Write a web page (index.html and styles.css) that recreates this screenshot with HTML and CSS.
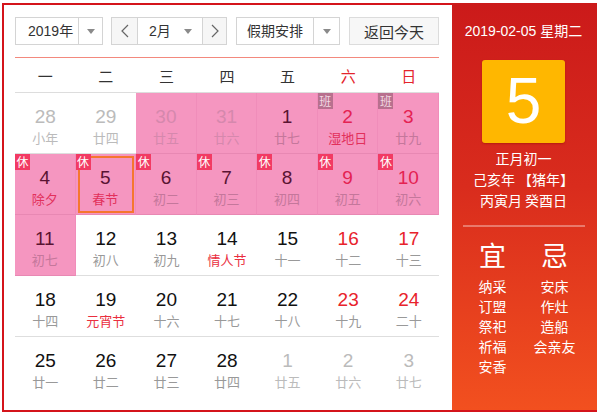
FILE: index.html
```html
<!DOCTYPE html>
<html lang="zh">
<head>
<meta charset="utf-8">
<title>万年历</title>
<link rel="stylesheet" href="styles.css">
</head>
<body>
<div class="cal">
  <div class="main">
    <div class="controls">
      <div class="select year"><span class="sel-text">2019年</span><span class="sel-arrow"><i class="tri"></i></span></div>
      <div class="month-group">
        <span class="nav-btn prev"><svg width="8" height="14" viewBox="0 0 8 14"><path d="M7 1 L1 7 L7 13" fill="none" stroke="#666" stroke-width="1.2"/></svg></span>
        <span class="month-mid"><span class="sel-text">2月</span><i class="tri"></i></span>
        <span class="nav-btn next"><svg width="8" height="14" viewBox="0 0 8 14"><path d="M1 1 L7 7 L1 13" fill="none" stroke="#666" stroke-width="1.2"/></svg></span>
      </div>
      <div class="select holiday"><span class="sel-text">假期安排</span><span class="sel-arrow"><i class="tri"></i></span></div>
      <div class="today-btn">返回今天</div>
    </div>
    <div class="weekdays">
      <span>一</span><span>二</span><span>三</span><span>四</span><span>五</span><span class="wk">六</span><span class="wk">日</span>
    </div>
    <div class="grid">
      <div class="cell other"><b>28</b><em>小年</em></div>
      <div class="cell other"><b>29</b><em>廿四</em></div>
      <div class="cell other hol"><b>30</b><em>廿五</em></div>
      <div class="cell other hol"><b>31</b><em>廿六</em></div>
      <div class="cell hol"><b>1</b><em>廿七</em></div>
      <div class="cell hol red"><span class="tag ban">班</span><b>2</b><em class="fest">湿地日</em></div>
      <div class="cell hol red"><span class="tag ban">班</span><b>3</b><em>廿九</em></div>

      <div class="cell hol"><span class="tag">休</span><b>4</b><em class="fest">除夕</em></div>
      <div class="cell hol sel"><span class="tag">休</span><b>5</b><em class="fest">春节</em></div>
      <div class="cell hol"><span class="tag">休</span><b>6</b><em>初二</em></div>
      <div class="cell hol"><span class="tag">休</span><b>7</b><em>初三</em></div>
      <div class="cell hol"><span class="tag">休</span><b>8</b><em>初四</em></div>
      <div class="cell hol red"><span class="tag">休</span><b>9</b><em>初五</em></div>
      <div class="cell hol red"><span class="tag">休</span><b>10</b><em>初六</em></div>

      <div class="cell hol"><b>11</b><em>初七</em></div>
      <div class="cell"><b>12</b><em>初八</em></div>
      <div class="cell"><b>13</b><em>初九</em></div>
      <div class="cell"><b>14</b><em class="fest">情人节</em></div>
      <div class="cell"><b>15</b><em>十一</em></div>
      <div class="cell red"><b>16</b><em>十二</em></div>
      <div class="cell red"><b>17</b><em>十三</em></div>

      <div class="cell"><b>18</b><em>十四</em></div>
      <div class="cell"><b>19</b><em class="fest">元宵节</em></div>
      <div class="cell"><b>20</b><em>十六</em></div>
      <div class="cell"><b>21</b><em>十七</em></div>
      <div class="cell"><b>22</b><em>十八</em></div>
      <div class="cell red"><b>23</b><em>十九</em></div>
      <div class="cell red"><b>24</b><em>二十</em></div>

      <div class="cell last"><b>25</b><em>廿一</em></div>
      <div class="cell last"><b>26</b><em>廿二</em></div>
      <div class="cell last"><b>27</b><em>廿三</em></div>
      <div class="cell last"><b>28</b><em>廿四</em></div>
      <div class="cell last other"><b>1</b><em>廿五</em></div>
      <div class="cell last other"><b>2</b><em>廿六</em></div>
      <div class="cell last other"><b>3</b><em>廿七</em></div>
    </div>
  </div>
  <div class="side">
    <div class="side-date">2019-02-05 星期二</div>
    <div class="big-day">5</div>
    <div class="lunar">
      <p>正月初一</p>
      <p>己亥年 【猪年】</p>
      <p>丙寅月 癸酉日</p>
    </div>
    <div class="side-line"></div>
    <div class="yiji">
      <div class="col">
        <div class="yj-title">宜</div>
        <p>纳采</p><p>订盟</p><p>祭祀</p><p>祈福</p><p>安香</p>
      </div>
      <div class="col">
        <div class="yj-title">忌</div>
        <p>安床</p><p>作灶</p><p>造船</p><p>会亲友</p>
      </div>
    </div>
  </div>
</div>
</body>
</html>
```
FILE: styles.css
```css
* { box-sizing: border-box; }
html, body { margin: 0; padding: 0; background: #fff; }
body {
  font-family: "Liberation Sans", "Noto Sans CJK SC", Arial, sans-serif;
  color: #222;
}
.cal {
  margin: 3px 0 0 2px;
  width: 595px;
  height: 409px;
  border: 2px solid #d4141b;
  border-right: 0;
  display: flex;
  background: #fff;
}
.main {
  width: 448px;
  padding: 12px 13px 0 11px;
}
.controls {
  display: flex;
  height: 28px;
  font-size: 14px;
  color: #333;
}
.select, .month-group, .today-btn {
  border: 1px solid #d4d4d4;
  height: 28px;
  display: flex;
  align-items: center;
  background: #fff;
}
.sel-text { line-height: 26px; }
.year { width: 88px; margin-right: 8px; }
.year .sel-text { width: 62px; padding-left: 12px; }
.sel-arrow {
  flex: 1;
  height: 26px;
  border-left: 1px solid #d4d4d4;
  display: flex;
  align-items: center;
  justify-content: center;
}
.tri {
  display: block;
  width: 0; height: 0;
  border-left: 4px solid transparent;
  border-right: 4px solid transparent;
  border-top: 5px solid #8a8a8a;
}
.month-group { width: 116px; margin-right: 9px; }
.nav-btn {
  width: 26px;
  height: 26px;
  background: #f6f6f6;
  display: flex;
  align-items: center;
  justify-content: center;
}
.nav-btn.prev { border-right: 1px solid #d4d4d4; }
.nav-btn.next { border-left: 1px solid #d4d4d4; width: 24px; }
.month-mid {
  flex: 1;
  display: flex;
  align-items: center;
  justify-content: space-between;
  padding: 0 10px 0 11px;
}
.holiday { width: 104px; margin-right: 9px; }
.holiday .sel-text { width: 76px; padding-left: 10px; }
.today-btn {
  width: 90px;
  justify-content: center;
  background: #f7f7f7;
  border-color: #dcdcdc;
  font-size: 15px;
}
.weekdays {
  margin-top: 12px;
  border-top: 1px solid #f3897d;
  border-bottom: 1px solid #ddd;
  height: 36px;
  display: grid;
  grid-template-columns: repeat(7, 1fr);
  align-items: center;
  text-align: center;
  font-family: "Noto Sans CJK SC", sans-serif;
  font-size: 15px;
  color: #333;
}
.weekdays .wk { color: #e4242b; }
.grid {
  display: grid;
  grid-template-columns: repeat(7, 1fr);
  grid-auto-rows: 61px;
}
.cell {
  position: relative;
  border-bottom: 1px solid #dedede;
  display: flex;
  flex-direction: column;
  align-items: center;
  padding-top: 13px;
}
.cell.last { border-bottom: 0; }
.cell b {
  font-weight: normal;
  font-size: 19px;
  line-height: 22px;
  color: #111;
}
.cell em {
  font-style: normal;
  font-family: "Noto Sans CJK SC", sans-serif;
  font-size: 13px;
  line-height: 20px;
  color: #999;
}
.cell.red b { color: #e8232c; }
.cell em.fest { color: #ea2f3f; }
.cell.other b { color: #bbb; }
.cell.other em { color: #bbb; }
.cell.hol {
  background: #f596c0;
  border-bottom-color: #e888b3;
  border-right: 1px solid #f08dba;
}
.cell.hol b { color: #5a1332; }
.cell.hol.red b { color: #e42252; }
.cell.hol em { color: #c4779b; }
.cell.hol em.fest { color: #e2305b; }
.cell.hol.other b { color: #d588ad; }
.cell.hol.other em { color: #d588ad; }
.cell.sel::after {
  content: "";
  position: absolute;
  left: 2px; right: 1px; top: 2px; bottom: 1px;
  border: 2px solid #f5772e;
}
.tag {
  position: absolute;
  z-index: 1;
  left: 0; top: 0;
  width: 15px;
  height: 16px;
  background: #f23a63;
  color: #fff;
  font-family: "Noto Sans CJK SC", sans-serif;
  font-size: 12px;
  line-height: 15px;
  text-align: center;
}
.tag.ban { background: #b8708e; color: #f2d8e2; }
.side {
  width: 145px;
  margin-right: 0;
  background: linear-gradient(to bottom, #cb1a1a 0%, #d92c1d 45%, #f2501f 100%);
  color: #fff;
  font-family: "Noto Sans CJK SC", sans-serif;
  text-align: center;
  display: flex;
  flex-direction: column;
  align-items: center;
  margin-top: -2px;
  padding-top: 18px;
}
.side-date {
  font-family: "Liberation Sans", "Noto Sans CJK SC", sans-serif;
  font-size: 14px;
  line-height: 20px;
  margin-left: -2px;
}
.big-day {
  margin-top: 19px;
  width: 83px;
  height: 83px;
  background: #ffb700;
  border-radius: 3px;
  box-shadow: 0 1px 2px rgba(120,0,0,0.35);
  font-family: "Liberation Sans", sans-serif;
  font-size: 64px;
  line-height: 83px;
  margin-left: -2px;
}
.lunar { margin-top: 5px; font-size: 14px; margin-left: -2px; }
.lunar p { margin: 0; line-height: 21px; }
.side-line {
  margin-top: 14px;
  width: 122px;
  height: 2px;
  background: rgba(255,255,255,0.35);
  margin-left: -2px;
}
.yiji {
  display: flex;
  width: 124px;
  margin-top: 10px;
  margin-left: -2px;
}
.yiji .col { width: 62px; }
.yj-title {
  font-size: 27px;
  line-height: 36px;
  margin-bottom: 3px;
}
.yiji p { margin: 0; font-size: 14px; line-height: 20px; }
```
